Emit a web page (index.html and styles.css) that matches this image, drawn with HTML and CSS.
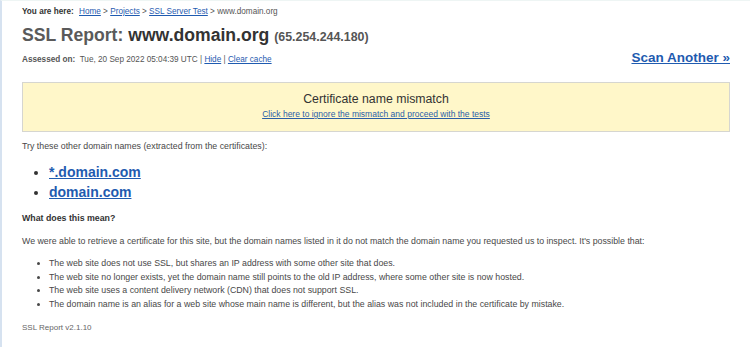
FILE: index.html
```html
<!DOCTYPE html>
<html lang="en">
<head>
    <meta charset="UTF-8">
    <meta name="viewport" content="width=device-width, initial-scale=1.0">
    <title>SSL Report: www.domain.org</title>
    <link rel="stylesheet" href="styles.css">
</head>
<body>
  <div class="page">
    <div class="crumbs">
      <b>You are here:</b>
      <a href="#">Home</a> &gt; <a href="#">Projects</a> &gt; <a href="#">SSL Server Test</a> &gt; www.domain.org
    </div>

    <div class="header">
      <div class="head-left">
        <div class="title">SSL Report: <span class="host">www.domain.org</span> <span class="ip">(65.254.244.180)</span></div>
        <div class="assessed"><b>Assessed on:</b>&nbsp; Tue, 20 Sep 2022 05:04:39 UTC | <a href="#">Hide</a> | <a href="#">Clear cache</a></div>
      </div>
      <a class="scan" href="#">Scan Another &raquo;</a>
    </div>

    <div class="warning">
      <div class="warning-title">Certificate name mismatch</div>
      <a href="#">Click here to ignore the mismatch and proceed with the tests</a>
    </div>

    <p class="try">Try these other domain names (extracted from the certificates):</p>
    <ul class="domains">
      <li><a href="#">*.domain.com</a></li>
      <li><a href="#">domain.com</a></li>
    </ul>

    <p class="question">What does this mean?</p>
    <p class="explain">We were able to retrieve a certificate for this site, but the domain names listed in it do not match the domain name you requested us to inspect. It's possible that:</p>
    <ul class="reasons">
      <li>The web site does not use SSL, but shares an IP address with some other site that does.</li>
      <li>The web site no longer exists, yet the domain name still points to the old IP address, where some other site is now hosted.</li>
      <li>The web site uses a content delivery network (CDN) that does not support SSL.</li>
      <li>The domain name is an alias for a web site whose main name is different, but the alias was not included in the certificate by mistake.</li>
    </ul>

    <div class="footer">SSL Report v2.1.10</div>
  </div>
</body>
</html>
```

FILE: styles.css
```css
body {
  margin: 0;
  background: #fff;
  border-left: 2px solid #d6e2f0;
  border-top: 1px solid #eef5f4;
  font-family: "Liberation Sans", Arial, sans-serif;
  color: #484848;
  min-height: 347px;
  box-sizing: border-box;
}

a {
  color: #1f5bb0;
}

.page {
  padding: 5px 20px 0 20px;
}

.crumbs {
  font-size: 8.2px;
  line-height: 12px;
  color: #555;
}

.crumbs b {
  color: #333;
  margin-right: 3px;
}

.header {
  display: flex;
  justify-content: space-between;
  align-items: flex-end;
  margin-top: 6px;
}

.title {
  font-size: 17.6px;
  line-height: 22px;
  font-weight: bold;
  color: #5a5a5a;
}

.title .host {
  color: #333;
}

.title .ip {
  font-size: 12.4px;
  color: #555;
}

.assessed {
  margin-top: 6px;
  font-size: 8.2px;
  line-height: 12px;
  color: #555;
}

.scan {
  font-size: 13.5px;
  line-height: 16px;
  font-weight: bold;
}

.warning {
  margin-top: 16px;
  background: #fff7c9;
  border: 1px solid #d6d6d0;
  text-align: center;
  padding: 8px 0 11px;
  font-size: 8.5px;
  line-height: 12px;
}

.warning-title {
  font-size: 12.3px;
  line-height: 17px;
  color: #333;
}

.warning a {
  display: block;
  color: #2a5ea8;
}

p {
  margin: 0;
}

.try,
.question,
.explain {
  font-size: 8.8px;
  line-height: 12px;
}

.try {
  margin-top: 8px;
}

.domains {
  margin: 10px 0 0;
  padding-left: 27px;
  font-size: 14px;
  line-height: 20px;
  font-weight: bold;
  color: #333;
}

.question {
  margin-top: 10px;
  font-weight: bold;
  color: #333;
}

.explain {
  margin-top: 11px;
}

.reasons {
  margin: 10px 0 0;
  padding-left: 27px;
  font-size: 8.8px;
  line-height: 13.7px;
}

.footer {
  margin-top: 10px;
  font-size: 8px;
  line-height: 12px;
  color: #666;
}
```
